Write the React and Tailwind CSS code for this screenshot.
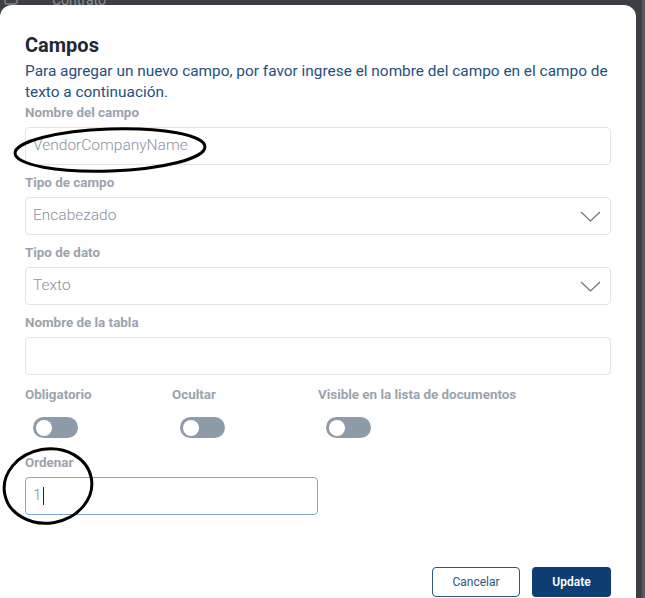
import React from "react";

function Label({ children }) {
  return (
    <div className="text-[13.4px] leading-[16px] font-bold text-[#9ba3ad]">{children}</div>
  );
}

function Chevron() {
  return (
    <svg width="21" height="11" viewBox="0 0 21 11" fill="none">
      <path d="M1 1 L10.5 10 L20 1" stroke="#6b7480" strokeWidth="1.2" />
    </svg>
  );
}

function Toggle() {
  return (
    <div className="ml-[8px] flex h-[21px] w-[45px] items-center rounded-full bg-[#8e9ba8] pl-[3px]">
      <div className="h-[16px] w-[16px] rounded-full bg-white" />
    </div>
  );
}

export default function App() {
  const font = { fontFamily: "Roboto, 'Liberation Sans', sans-serif" };
  return (
    <div className="relative h-[598px] w-[645px] overflow-hidden bg-[#3c3f44]" style={font}>
      {/* backdrop page content */}
      <div className="absolute left-[4px] top-[-8px] h-[13px] w-[14px] rounded-[3px] border-2 border-[#6e7278]" />
      <div className="absolute left-[52px] top-[-8px] text-[14px] leading-[16px] text-[#8e9296]">Contrato</div>
      <div className="absolute right-0 top-0 h-[598px] w-[3px] bg-[#55585c]" />

      <div className="absolute left-0 top-[5px] h-[620px] w-[636px] rounded-[12px] bg-white px-[25px] pt-[27px]">
        <div className="text-[20px] leading-[26px] font-bold text-[#1f2733]">Campos</div>
        <div className="-mr-[8px] mt-[3px] text-[15.4px] leading-[21px] text-[#24507e]">
          Para agregar un nuevo campo, por favor ingrese el nombre del campo en el campo de texto a continuación.
        </div>

        <div className="mt-[2px]">
          <Label>Nombre del campo</Label>
          <div className="mt-[6px] flex h-[38px] items-center rounded-[4px] border border-[#e1e4e8] px-[7px] text-[15.5px] font-light text-[#8a939e]">
            VendorCompanyName
          </div>
        </div>

        <div className="mt-[10px]">
          <Label>Tipo de campo</Label>
          <div className="mt-[6px] flex h-[38px] items-center justify-between rounded-[4px] border border-[#e1e4e8] pl-[7px] pr-[9px] text-[15.5px] font-light text-[#8a939e]">
            <span>Encabezado</span>
            <Chevron />
          </div>
        </div>

        <div className="mt-[10px]">
          <Label>Tipo de dato</Label>
          <div className="mt-[6px] flex h-[38px] items-center justify-between rounded-[4px] border border-[#e1e4e8] pl-[7px] pr-[9px] text-[15.5px] font-light text-[#8a939e]">
            <span>Texto</span>
            <Chevron />
          </div>
        </div>

        <div className="mt-[10px]">
          <Label>Nombre de la tabla</Label>
          <div className="mt-[6px] h-[38px] rounded-[4px] border border-[#e1e4e8]" />
        </div>

        <div className="mt-[12px] flex">
          <div className="w-[147px]">
            <Label>Obligatorio</Label>
            <div className="mt-[14px]"><Toggle /></div>
          </div>
          <div className="w-[146px]">
            <Label>Ocultar</Label>
            <div className="mt-[14px]"><Toggle /></div>
          </div>
          <div>
            <Label>Visible en la lista de documentos</Label>
            <div className="mt-[14px]"><Toggle /></div>
          </div>
        </div>

        <div className="mt-[17px]">
          <Label>Ordenar</Label>
          <div className="mt-[6px] flex h-[38px] w-[293px] items-center rounded-[4px] border border-[#7ea6d6] px-[7px] text-[15.5px] font-light text-[#7d8690]">
            <span>1</span>
            <span className="ml-[1px] h-[18px] w-[1px] bg-[#222]" />
          </div>
        </div>

        <div className="mt-[52px] flex justify-end gap-[12px]">
          <button className="h-[30px] w-[88px] rounded-[4px] border border-[#2b5585] bg-white text-[12px] font-normal text-[#2b5585]">
            Cancelar
          </button>
          <button className="h-[30px] w-[79px] rounded-[4px] bg-[#0f3e74] text-[12px] font-semibold text-white">
            Update
          </button>
        </div>
      </div>

      <svg className="pointer-events-none absolute left-0 top-0" width="645" height="598">
        <ellipse cx="110" cy="150" rx="95" ry="21" fill="none" stroke="#000" strokeWidth="3" transform="rotate(-2 110 150)" />
        <ellipse cx="48" cy="486" rx="44" ry="37" fill="none" stroke="#000" strokeWidth="3" transform="rotate(-10 48 486)" />
      </svg>
    </div>
  );
}
